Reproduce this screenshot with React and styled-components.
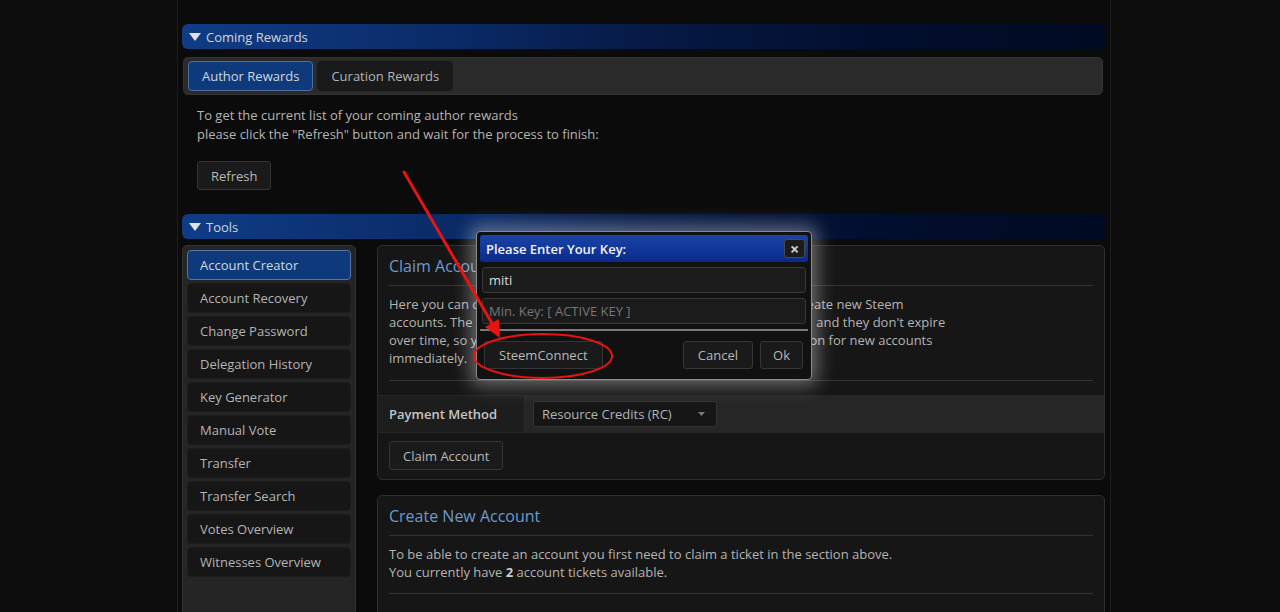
import React from "react";
import styled, { createGlobalStyle } from "styled-components";

const Global = createGlobalStyle`
  html, body { margin: 0; padding: 0; background: #0d0d0d; }
  body { font-family: "Open Sans", "Liberation Sans", sans-serif; font-size: 13px; color: #b4b4b4; }
  * { box-sizing: border-box; }
`;

const Page = styled.div`
  position: relative;
  width: 1280px;
  height: 612px;
  overflow: hidden;
`;

const Container = styled.div`
  margin-left: 177px;
  width: 934px;
  min-height: 612px;
  background: #0b0b0b;
  border-left: 1px solid #1d1d1d;
  border-right: 1px solid #1d1d1d;
  padding: 24px 4px 0 4px;
`;

const SectionHeader = styled.div`
  height: 25px;
  border-radius: 6px;
  background: linear-gradient(to right, #103c86 0%, #0a2a66 30%, #061a45 50%, #020e2e 75%, #000a22 100%);
  display: flex;
  align-items: center;
  gap: 5px;
  padding-left: 7px;
  color: #d4d4d4;
  font-size: 13px;
`;

const Caret = () => (
  <svg width="12" height="8" viewBox="0 0 12 8">
    <polygon points="0,0 12,0 6,8" fill="#e0e0e0" />
  </svg>
);

const TabsBar = styled.div`
  margin: 8px 3px 0 1px;
  background: #2a2a2a;
  border: 1px solid #333;
  border-radius: 5px;
  padding: 3px 4px;
  display: flex;
  gap: 4px;
`;

const Tab = styled.div`
  height: 30px;
  padding: 0 13px;
  display: flex;
  align-items: center;
  border-radius: 4px;
  font-size: 13px;
  color: ${(p) => (p.$active ? "#cfd6e0" : "#b4b4b4")};
  background: ${(p) => (p.$active ? "#0e3a7c" : "#1a1a1a")};
  border: 1px solid ${(p) => (p.$active ? "#4e6f9e" : "#1a1a1a")};
`;

const SectionBody = styled.div`
  padding: 11px 15px 24px;
`;

const Paragraph = styled.p`
  margin: 0;
  line-height: 19px;
  font-size: 13px;
  color: #b4b4b4;
`;

const Button = styled.button`
  font-family: inherit;
  font-size: 13px;
  color: #b8b8b8;
  background: #1a1a1a;
  border: 1px solid #353535;
  border-radius: 3px;
  height: ${(p) => p.$h || 29}px;
  padding: 0 ${(p) => p.$px || 13}px;
  cursor: pointer;
`;

const RefreshRow = styled.div`
  margin-top: 17px;
  display: flex;
`;

const ToolsLayout = styled.div`
  display: grid;
  grid-template-columns: 174px 728px;
  gap: 21px;
  margin-top: 6px;
  align-items: start;
`;

const Sidebar = styled.div`
  background: #252525;
  border: 1px solid #303030;
  border-radius: 5px;
  padding: 4px;
  display: flex;
  flex-direction: column;
  gap: 3px;
  min-height: 380px;
`;

const MenuItem = styled.div`
  height: 30px;
  display: flex;
  align-items: center;
  padding-left: 12px;
  border-radius: 4px;
  font-size: 13px;
  color: ${(p) => (p.$active ? "#d0d8e4" : "#b4b4b4")};
  background: ${(p) => (p.$active ? "#0e3a7c" : "#161616")};
  border: 1px solid ${(p) => (p.$active ? "#5674a4" : "#1c1c1c")};
`;

const Content = styled.div`
  display: flex;
  flex-direction: column;
  gap: 15px;
`;

const Panel = styled.div`
  background: #161616;
  border: 1px solid #2e2e2e;
  border-radius: 5px;
  padding: 0 0 ${(p) => p.$pb || 0}px;
`;

const PanelInner = styled.div`
  padding: 0 11px;
`;

const PanelTitle = styled.div`
  padding: 9px 0 8px;
  line-height: 22px;
  font-size: 16px;
  color: #6b9ad0;
  border-bottom: 1px solid #333;
`;

const PanelText = styled.div`
  padding: 9px 0 ${(p) => p.$pb || 12}px;
  line-height: 18px;
  border-bottom: 1px solid #333;
  color: #b4b4b4;
`;

const FormRow = styled.div`
  margin-top: 14px;
  display: grid;
  grid-template-columns: 147px 1fr;
  height: 38px;
  border-top: 1px solid #262626;
  border-bottom: 1px solid #262626;
`;

const FormLabel = styled.div`
  display: flex;
  align-items: center;
  padding-left: 11px;
  background: #1d1d1d;
  border-right: 1px solid #2a2a2a;
  color: #c6c6c6;
  font-weight: 600;
`;

const FormField = styled.div`
  display: flex;
  align-items: center;
  padding-left: 8px;
  background: #262626;
`;

const Select = styled.div`
  width: 184px;
  height: 26px;
  background: #161616;
  border: 1px solid #333;
  border-radius: 2px;
  display: flex;
  align-items: center;
  justify-content: space-between;
  padding: 0 11px 0 8px;
  color: #b4b4b4;
`;

const ButtonRow = styled.div`
  padding: 8px 11px 0;
  display: flex;
`;

const Strong = styled.b`
  color: #cfcfcf;
`;

const Dialog = styled.div`
  position: absolute;
  left: 476px;
  top: 231px;
  width: 336px;
  height: 149px;
  background: #111;
  border: 1px solid #8a8a8a;
  border-radius: 4px;
  box-shadow: 0 0 18px 6px rgba(255, 255, 255, 0.35);
  padding: 3px;
  display: flex;
  flex-direction: column;
`;

const DialogHeader = styled.div`
  height: 27px;
  border-radius: 3px;
  background: linear-gradient(#1a44a6, #0a2a8a);
  display: flex;
  align-items: center;
  justify-content: space-between;
  padding: 0 3px 0 6px;
  color: #f2f2f2;
  font-weight: 600;
  font-size: 13px;
`;

const CloseBtn = styled.div`
  width: 21px;
  height: 19px;
  background: #1b1b1b;
  border: 1px solid #4a4a4a;
  border-radius: 3px;
  display: flex;
  align-items: center;
  justify-content: center;
  color: #d0d0d0;
  font-size: 16px;
  font-weight: 700;
  line-height: 1;
`;

const Input = styled.div`
  margin: 5px 2px 0;
  height: 26px;
  background: #1b1b1b;
  border: 1px solid #383838;
  border-radius: 3px;
  display: flex;
  align-items: center;
  padding-left: 6px;
  color: ${(p) => (p.$placeholder ? "#767676" : "#dcdcdc")};
  font-size: 13px;
`;

const DialogDivider = styled.div`
  margin-top: 5px;
  height: 2px;
  background: #7a7a7a;
`;

const DialogFooter = styled.div`
  display: flex;
  align-items: center;
  padding: 10px 5px 0 4px;
  gap: 7px;
`;

const Spacer = styled.div`
  flex: 1;
`;

const Annotation = styled.svg`
  position: absolute;
  left: 0;
  top: 0;
  pointer-events: none;
`;

const menu = [
  "Account Creator",
  "Account Recovery",
  "Change Password",
  "Delegation History",
  "Key Generator",
  "Manual Vote",
  "Transfer",
  "Transfer Search",
  "Votes Overview",
  "Witnesses Overview",
];

export default function App() {
  return (
    <Page>
      <Global />
      <Container>
        <SectionHeader>
          <Caret />
          Coming Rewards
        </SectionHeader>
        <TabsBar>
          <Tab $active>Author Rewards</Tab>
          <Tab>Curation Rewards</Tab>
        </TabsBar>
        <SectionBody>
          <Paragraph>
            To get the current list of your coming author rewards
            <br />
            please click the "Refresh" button and wait for the process to finish:
          </Paragraph>
          <RefreshRow>
            <Button>Refresh</Button>
          </RefreshRow>
        </SectionBody>

        <SectionHeader>
          <Caret />
          Tools
        </SectionHeader>
        <ToolsLayout>
          <Sidebar>
            {menu.map((m, i) => (
              <MenuItem key={m} $active={i === 0}>
                {m}
              </MenuItem>
            ))}
          </Sidebar>
          <Content>
            <Panel $pb={9}>
              <PanelInner>
                <PanelTitle>Claim Account</PanelTitle>
                <PanelText $pb={13}>
                  Here you can claim account tickets which can then be used later to create new Steem
                  <br />
                  accounts. The tickets can be paid with Resource Credits or with STEEM and they don't expire
                  <br />
                  over time, so you can claim them in advance and then use them later on for new accounts
                  <br />
                  immediately.
                </PanelText>
              </PanelInner>
              <FormRow>
                <FormLabel>Payment Method</FormLabel>
                <FormField>
                  <Select>
                    <span>Resource Credits (RC)</span>
                    <svg width="7" height="4" viewBox="0 0 7 4">
                      <polygon points="0,0 7,0 3.5,4" fill="#7a7a7a" />
                    </svg>
                  </Select>
                </FormField>
              </FormRow>
              <ButtonRow>
                <Button>Claim Account</Button>
              </ButtonRow>
            </Panel>
            <Panel $pb={40}>
              <PanelInner>
                <PanelTitle>Create New Account</PanelTitle>
                <PanelText $pb={12}>
                  To be able to create an account you first need to claim a ticket in the section above.
                  <br />
                  You currently have <Strong>2</Strong> account tickets available.
                </PanelText>
              </PanelInner>
            </Panel>
          </Content>
        </ToolsLayout>
      </Container>

      <Dialog>
        <DialogHeader>
          Please Enter Your Key:
          <CloseBtn>×</CloseBtn>
        </DialogHeader>
        <Input>miti</Input>
        <Input $placeholder>Min. Key: [ ACTIVE KEY ]</Input>
        <DialogDivider />
        <DialogFooter>
          <Button $h={28} $px={14}>SteemConnect</Button>
          <Spacer />
          <Button $h={28} $px={14}>Cancel</Button>
          <Button $h={28} $px={12}>Ok</Button>
        </DialogFooter>
      </Dialog>

      <Annotation width="1280" height="612" viewBox="0 0 1280 612">
        <line x1="404" y1="172" x2="493" y2="325" stroke="#e81414" strokeWidth="3" strokeLinecap="round" />
        <polygon points="500,338 485,327 499,319" fill="#e81414" />
        <ellipse cx="543" cy="356" rx="69" ry="22" fill="none" stroke="#e81414" strokeWidth="2" />
      </Annotation>
    </Page>
  );
}
